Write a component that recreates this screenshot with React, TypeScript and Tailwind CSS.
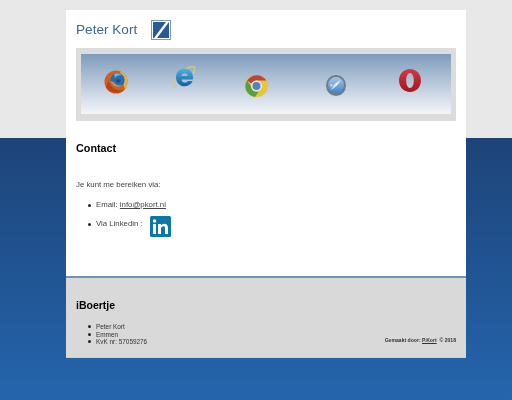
const font = "[font-family:'Liberation_Sans',Arial,sans-serif]";

const Firefox = () => (
  <svg width="24" height="24" viewBox="0 0 24 24" className="block blur-[0.4px]">
    <circle cx="12" cy="12" r="11.500" fill="#d1601f" />
    <path d="M16 1.500C21 3 23.500 7.500 23.500 12c0 3-1 5-2.500 7-1-3-1.500-5-3-8z" fill="#e3b34a" />
    <path d="M2 17c3 6 12 8 18 3-4 1-9 0-12-3-2-2-3-5-3-7z" fill="#b8431a" />
    <circle cx="13.500" cy="10" r="7.200" fill="#2b6cab" />
    <path d="M6.500 11c1 5 7.500 8 12 4-2.500.8-5 .5-7-1-1.500-1.300-3-2.700-5-3z" fill="#e08a2c" />
    <path d="M10 4c2.500-1.500 6-1 8 1.500-3-.8-5.500 0-7 2.500z" fill="#74b3dd" />
    <path d="M13 9l4 1-2 3-3-1z" fill="#1d4f86" />
  </svg>
);

const IE = () => (
  <svg width="22" height="23" viewBox="0 0 22 23" className="block blur-[0.4px]">
    <defs>
      <linearGradient id="ie" x1="0" y1="0" x2="0" y2="1">
        <stop offset="0" stopColor="#4fb3e4" />
        <stop offset="1" stopColor="#135f9f" />
      </linearGradient>
    </defs>
    <path d="M2 22c-3-3 1-11 7-16 5-4 10-6 12-5 1.500 1 .5 4-1 7" fill="none" stroke="#d5cb78" strokeWidth="1.500" />
    <path fillRule="evenodd" d="M11.500 2.500c4.800 0 8.500 3.800 8.500 8.700 0 .9 0 1.500-.2 2.300H8.500c.3 2 1.500 3 3.300 3 1.300 0 2.300-.5 3-1.500h4.800c-1.200 3.200-4.300 5.200-7.900 5.200-5 0-8.700-3.800-8.700-8.800s3.700-8.900 8.500-8.900zM8.500 10h6.300c-.3-1.800-1.500-2.800-3.200-2.800s-2.800 1-3.100 2.800z" fill="url(#ie)" />
  </svg>
);

const Chrome = () => (
  <svg width="23" height="22" viewBox="0 0 23 22" className="block blur-[0.4px]">
    <ellipse cx="11.500" cy="11" rx="11.500" ry="11" fill="#e5c739" />
    <path d="M2 5.500a11.500 11 0 0 1 19.500 0H11.500a5.500 5.500 0 0 0-5 3z" fill="#c4403a" />
    <path d="M2 5.500A11.500 11 0 0 0 10 22l4-6a5.500 5.500 0 0 1-7.800-4.500z" fill="#5a9f3e" />
    <circle cx="11.500" cy="11" r="5.500" fill="#e8ecf0" />
    <circle cx="11.500" cy="11" r="4" fill="#5183bd" />
  </svg>
);

const Safari = () => (
  <svg width="20" height="21" viewBox="0 0 20 21" className="block blur-[0.4px]">
    <defs>
      <linearGradient id="safari" x1="0" y1="0" x2="0" y2="1">
        <stop offset="0" stopColor="#a9c8e6" />
        <stop offset="1" stopColor="#3f86d0" />
      </linearGradient>
    </defs>
    <ellipse cx="10" cy="10.500" rx="10" ry="10.500" fill="#6c7b8e" />
    <circle cx="10" cy="10" r="8" fill="url(#safari)" />
    <path d="M15 5l-4.500 6-2-2z" fill="#f1f4f8" />
    <path d="M5 15l3.500-6 2 2z" fill="#dfe6ee" />
    <path d="M4 9l3 .5-2 3z" fill="#e9f0f7" opacity="0.7" />
  </svg>
);

const Opera = () => (
  <svg width="22" height="23" viewBox="0 0 22 23" className="block blur-[0.3px]">
    <defs>
      <linearGradient id="opera" x1="0" y1="0" x2="0" y2="1">
        <stop offset="0" stopColor="#cf3a40" />
        <stop offset="1" stopColor="#a3161f" />
      </linearGradient>
    </defs>
    <path fillRule="evenodd" d="M11 0c6.200 0 11 5 11 11.500S17.200 23 11 23 0 18 0 11.500 4.800 0 11 0zm0 4c-2.300 0-3.800 3.300-3.800 7.500s1.500 7.500 3.800 7.500 3.800-3.300 3.800-7.500S13.300 4 11 4z" fill="url(#opera)" />
  </svg>
);

const Logo = () => (
  <svg width="20" height="20" viewBox="0 0 20 20" className="block">
    <rect x="0.500" y="0.500" width="19" height="19" fill="#fff" stroke="#7e97b5" />
    <rect x="2" y="2" width="16" height="16" fill="#265a9a" />
    <path d="M3 18 15 2h3L6 18z" fill="#fff" />
  </svg>
);

const LinkedIn = () => (
  <svg width="21" height="21" viewBox="0 0 21 21" className="block">
    <rect width="21" height="21" rx="1.500" fill="#0e76a8" />
    <rect x="3" y="8" width="3" height="10" fill="#fff" />
    <circle cx="4.500" cy="5" r="1.800" fill="#fff" />
    <path d="M8 8h3v1.500c.7-1.100 1.800-1.800 3.300-1.800 2.600 0 3.700 1.600 3.700 4.300v6h-3v-5.500c0-1.400-.5-2.200-1.700-2.200s-2.300.9-2.300 2.400V18H8z" fill="#fff" />
  </svg>
);

const Bullet = () => <span className="mr-[5px] h-[3px] w-[3px] shrink-0 rounded-full bg-[#222]" />;

export default function App() {
  return (
    <div className={`${font} h-[400px] w-[512px] overflow-hidden pt-[10px] pl-[66px] bg-[linear-gradient(to_bottom,#e8e8e8_0,#e8e8e8_138px,#1d4479_138px,#2565ad_400px)]`}>
      <div className="flex h-[348px] w-[400px] flex-col bg-white">
        {/* header */}
        <div className="flex h-[38px] items-center pl-[10px] pt-[2px]">
          <span className="blur-[0.3px] text-[13.600px] leading-[20px] text-[#3d6797]">Peter Kort</span>
          <div className="ml-[14px]">
            <Logo />
          </div>
        </div>

        {/* browsers banner */}
        <div className="mx-[10px] h-[73px] border-x-[5px] border-t-[6px] border-b-[7px] border-[#dcdcdc]">
          <div className="flex h-[60px] items-start bg-[linear-gradient(to_bottom,#7f9cbd,#f4f6f9)]">
            <div className="ml-[23px] mt-[16px]"><Firefox /></div>
            <div className="ml-[45px] mt-[12px]"><IE /></div>
            <div className="ml-[50px] mt-[21px]"><Chrome /></div>
            <div className="ml-[58px] mt-[21px]"><Safari /></div>
            <div className="ml-[53px] mt-[15px]"><Opera /></div>
          </div>
        </div>

        {/* contact */}
        <div className="flex-1 pl-[10px]">
          <h2 className="mt-[20px] blur-[0.3px] text-[10.800px] leading-[15px] font-bold text-black">Contact</h2>
          <p className="mt-[23px] blur-[0.3px] text-[7.800px] leading-[12px] text-[#444]">Je kunt me bereiken via:</p>
          <ul className="mt-[8px] pl-[12px] text-[7.800px] text-[#444]">
            <li className="flex items-center leading-[12px]">
              <Bullet />
              <span className="blur-[0.3px]">Email: <a className="underline">info@pkort.nl</a></span>
            </li>
            <li className="mt-[7px] flex h-[12px] items-center leading-[12px]">
              <Bullet />
              <span className="blur-[0.3px]">Via Linkedin :</span>
              <div className="ml-[7px] mt-[4px]"><LinkedIn /></div>
            </li>
          </ul>
        </div>

        {/* footer */}
        <div className="h-[82px] border-t-2 border-b border-t-[#6f92bd] border-b-[#c3d1e3] bg-[#d9d9d9] px-[10px]">
          <h2 className="mt-[20px] blur-[0.3px] text-[10.500px] leading-[15px] font-bold text-black">iBoertje</h2>
          <div className="mt-[10px] flex items-end justify-between">
            <ul className="pl-[12px] text-[6.400px] leading-[7.500px] text-[#333]">
              <li className="flex items-center"><Bullet /><span className="blur-[0.2px]">Peter Kort</span></li>
              <li className="flex items-center"><Bullet /><span className="blur-[0.2px]">Emmen</span></li>
              <li className="flex items-center"><Bullet /><span className="blur-[0.2px]">KvK nr: 57059276</span></li>
            </ul>
            <p className="mb-[2px] blur-[0.2px] text-[5.100px] leading-[7px] text-[#333]">
              <b>Gemaakt door:</b> <a className="font-bold underline">P.Kort</a>&nbsp;&nbsp;<b>© 2018</b>
            </p>
          </div>
        </div>
      </div>
    </div>
  );
}
